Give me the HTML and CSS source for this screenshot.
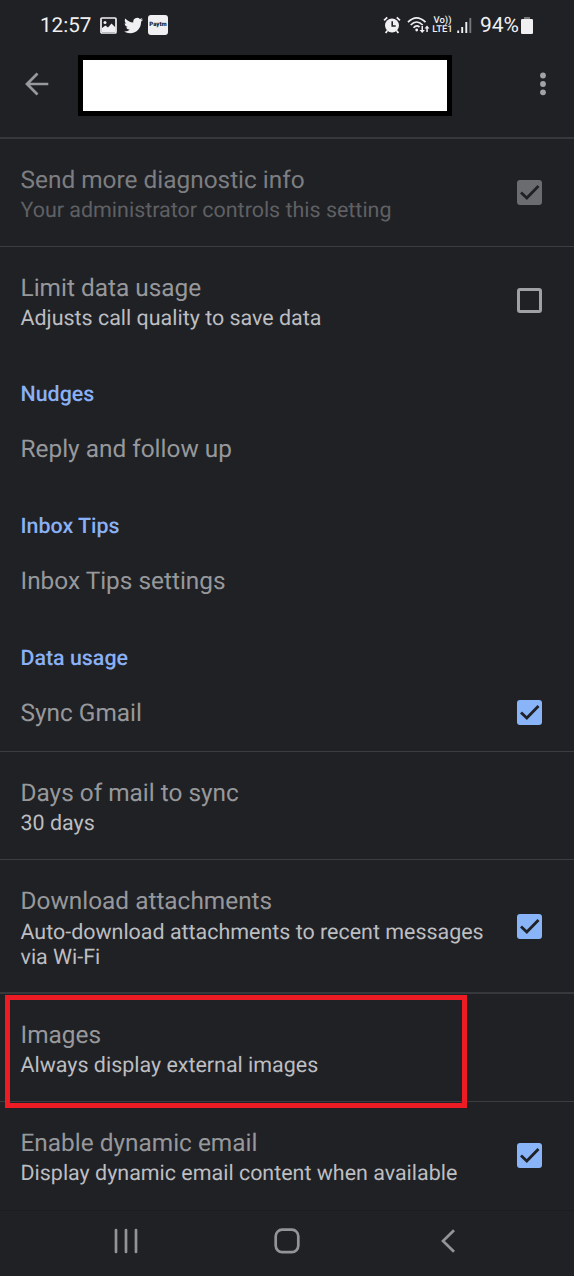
FILE: index.html
```html
<!DOCTYPE html>
<html lang="en">
<head>
  <meta charset="UTF-8" />
  <meta name="viewport" content="width=device-width, initial-scale=1.0" />
  <title>Settings</title>
  <link rel="stylesheet" href="styles.css">
</head>
<body>

<div class="screen">
  <div class="status-bar">
    <span class="time">12:57</span>
    <svg class="icon-picture" width="17" height="17" viewBox="0 0 17 17">
      <rect x="1" y="1" width="15" height="15" rx="1" fill="none" stroke="#f0f0f2" stroke-width="1.7" />
      <circle cx="5" cy="5.500" r="1.500" fill="#f0f0f2" />
      <path d="M2 11L5.500 8.500l2.500 2L11.500 6.500l4 4V15H2z" fill="#f0f0f2" />
    </svg>
    <svg class="icon-bird" width="19" height="17" viewBox="0 2 24 20">
      <path fill="#f0f0f2" d="M23.950 4.570a10 10 0 0 1-2.820.770 4.960 4.960 0 0 0 2.160-2.720c-.950.550-2 .950-3.130 1.180a4.920 4.920 0 0 0-8.380 4.480C7.690 8.090 4.070 6.130 1.640 3.160a4.820 4.820 0 0 0-.670 2.480c0 1.710.870 3.210 2.190 4.100a4.900 4.900 0 0 1-2.230-.620v.060a4.920 4.920 0 0 0 3.950 4.830 5 5 0 0 1-2.210.080 4.940 4.940 0 0 0 4.600 3.420A9.870 9.870 0 0 1 0 19.540a13.990 13.990 0 0 0 7.550 2.210c9.050 0 14-7.500 14-13.980 0-.210 0-.420-.020-.630a9.940 9.940 0 0 0 2.460-2.550z" />
    </svg>
    <span class="paytm">Paytm</span>

    <div class="status-right">
      <svg width="18" height="18" viewBox="0 0 17 17">
        <path d="M1 4.200L4 1.300M16 4.200L13 1.300M4 14l-1.500 2M13 14l1.500 2" stroke="#f0f0f2" stroke-width="1.700" fill="none" />
        <circle cx="8.500" cy="9" r="6.600" fill="#f0f0f2" />
        <path d="M8.700 5v4.500h3.300" stroke="#202125" stroke-width="1.500" fill="none" />
      </svg>
      <svg class="icon-wifi" width="23" height="18" viewBox="0 0 23 18">
        <g fill="none" stroke="#f0f0f2" stroke-width="1.700">
          <path d="M1 6.200Q9.500-2.500 18.500 6.200" />
          <path d="M3.700 9Q9.500 3 15.700 9" />
          <path d="M6.500 11.800Q9.500 8.500 12.500 11" />
        </g>
        <circle cx="9.700" cy="14" r="1.400" fill="#f0f0f2" />
        <path d="M14.500 10v4h-2l2.700 3 2.700-3h-1.900v-4zM19.300 16v-3.500h-1.800l2.500-3 2.500 3h-1.700V16z" fill="#f0f0f2" />
      </svg>
      <span class="volte"><span>Vo))</span><span>LTE1</span></span>
      <svg class="icon-signal" width="15" height="17" viewBox="0 0 15 17">
        <path d="M1.200 16v-2.500M5.200 16v-6M9.300 16V5" stroke="#f0f0f2" stroke-width="1.900" />
        <path d="M13.300 16V1" stroke="#77787b" stroke-width="1.900" />
      </svg>
      <span class="percent">94%</span>
      <svg class="icon-battery" width="12" height="17" viewBox="0 0 12 17">
        <rect x="3" y="0" width="6" height="3" fill="#77787b" />
        <rect x="0" y="2" width="12" height="15" rx="1.200" fill="#f0f0f2" />
      </svg>
    </div>
  </div>

  <div class="app-bar">
    <svg class="back" width="24" height="24" viewBox="0 0 24 24">
      <path d="M23.300 12H2.500M12.500 1.500L2 12l10.500 10.500" fill="none" stroke="#98999c" stroke-width="2.700" />
    </svg>
    <div class="account"></div>
    <svg class="more" width="6" height="24" viewBox="0 0 6 24">
      <g fill="#a2a3a6">
        <circle cx="3" cy="3.500" r="2.900" />
        <circle cx="3" cy="12" r="2.900" />
        <circle cx="3" cy="20.300" r="2.900" />
      </g>
    </svg>
  </div>

  <div class="row disabled">
    <div class="text">
      <div class="title">Send more diagnostic info</div>
      <div class="summary">Your administrator controls this setting</div>
    </div>
    <div class="checkbox checked"><svg viewBox="0 0 25 25"><path d="M4 12.500L9.800 18L21.500 6" /></svg></div>
  </div>
  <div class="row last">
    <div class="text">
      <div class="title">Limit data usage</div>
      <div class="summary">Adjusts call quality to save data</div>
    </div>
    <div class="checkbox"></div>
  </div>

  <div class="section">Nudges</div>
  <div class="row single no-line"><div class="title">Reply and follow up</div></div>

  <div class="section">Inbox Tips</div>
  <div class="row single no-line"><div class="title">Inbox Tips settings</div></div>

  <div class="section">Data usage</div>
  <div class="row single">
    <div class="title">Sync Gmail</div>
    <div class="checkbox checked"><svg viewBox="0 0 25 25"><path d="M4 12.500L9.800 18L21.500 6" /></svg></div>
  </div>
  <div class="row">
    <div class="text">
      <div class="title">Days of mail to sync</div>
      <div class="summary">30 days</div>
    </div>
  </div>
  <div class="row tall">
    <div class="text">
      <div class="title">Download attachments</div>
      <div class="summary">Auto-download attachments to recent messages<br>via Wi-Fi</div>
    </div>
    <div class="checkbox checked"><svg viewBox="0 0 25 25"><path d="M4 12.500L9.800 18L21.500 6" /></svg></div>
  </div>
  <div class="row images">
    <div class="text">
      <div class="title">Images</div>
      <div class="summary">Always display external images</div>
    </div>
    <div class="highlight"></div>
  </div>
  <div class="row no-line">
    <div class="text">
      <div class="title">Enable dynamic email</div>
      <div class="summary">Display dynamic email content when available</div>
    </div>
    <div class="checkbox checked"><svg viewBox="0 0 25 25"><path d="M4 12.500L9.800 18L21.500 6" /></svg></div>
  </div>

  <div class="nav-bar">
    <svg width="26" height="26" viewBox="-1 0 26 26">
      <path d="M2 2v22M12 2v22M22 2v22" stroke="#939497" stroke-width="2.700" stroke-linecap="round" />
    </svg>
    <svg width="26" height="26" viewBox="0 0 26 26">
      <rect x="1.700" y="1.700" width="22.600" height="22.400" rx="6.500" fill="none" stroke="#939497" stroke-width="2.700" />
    </svg>
    <svg width="26" height="26" viewBox="-5 0 26 26">
      <path d="M14 2.200L3 13l11 10.800" fill="none" stroke="#939497" stroke-width="2.700" />
    </svg>
  </div>
</div>

</body>
</html>
```

FILE: styles.css
```css
/* General Styling */
body {
  font-family: Roboto, sans-serif;
  background-color: #ffffff;
  margin: 0;
  text-rendering: geometricPrecision;
}

.screen {
  width: 574px;
  height: 1276px;
  background-color: #202125;
  overflow: hidden;
}

svg {
  display: block;
  flex: none;
}

/* Status bar */
.status-bar {
  display: flex;
  align-items: center;
  height: 50px;
  padding: 0 41px 0 40px;
  box-sizing: border-box;
  color: #f0f0f2;
  font-size: 21px;
}

.time {
  width: 60px;
  padding-top: 1px;
  font-size: 20.6px;
}

.icon-bird {
  margin-left: 7px;
}

.paytm {
  width: 20px;
  height: 20px;
  margin-left: 5px;
  border-radius: 3px;
  background-color: #f0f0f2;
  color: #202125;
  font-size: 6px;
  font-weight: 900;
  line-height: 19px;
  text-align: center;
}

.status-right {
  display: flex;
  align-items: center;
  margin-left: auto;
}

.icon-wifi {
  margin-left: 6px;
}

.volte {
  display: flex;
  flex-direction: column;
  align-items: center;
  width: 21px;
  margin-left: 2px;
  font-size: 9.5px;
  font-weight: 500;
  line-height: 9px;
}

.icon-signal {
  margin-left: 4px;
}

.percent {
  width: 39px;
  margin-left: 8px;
  padding-top: 1px;
}

.icon-battery {
  margin-left: 2px;
}

/* App bar */
.app-bar {
  display: flex;
  align-items: center;
  height: 89px;
  padding: 7px 28px 26px 25px;
  box-sizing: border-box;
  border-bottom: 2px solid #37383c;
}

.account {
  flex: none;
  width: 364px;
  height: 51px;
  margin: 2px 0 0 29px;
  border: 5px solid #000000;
  background-color: #ffffff;
}

.more {
  margin-left: auto;
}

/* Settings rows */
.row {
  display: flex;
  align-items: center;
  justify-content: space-between;
  position: relative;
  height: 108px;
  padding: 0 32px 0 20.5px;
  box-sizing: border-box;
  border-bottom: 1px solid #3c3d40;
}

.row.no-line {
  border-bottom-color: transparent;
}

.row.last {
  height: 109px;
  border-bottom: 2px solid transparent;
}

.row.single {
  height: 76px;
}

.row.tall {
  height: 134px;
  border-bottom-width: 2px;
  border-bottom-color: #37383c;
}

.text {
  padding-top: 2px;
}

.tall .text {
  padding-top: 4px;
}

.title {
  color: #97989b;
  font-size: 24.4px;
  line-height: 29px;
  white-space: nowrap;
}

.single .title {
  margin-bottom: 2px;
}

.summary {
  margin-top: 4px;
  color: #bdbec1;
  font-size: 21.45px;
  line-height: 25px;
  white-space: nowrap;
}

.tall .summary {
  margin-top: 5px;
}

.disabled .title {
  color: #7d7e81;
}

.disabled .summary {
  color: #5f6063;
}

.section {
  height: 56px;
  padding: 26px 20.5px 0;
  box-sizing: border-box;
  color: #8ab0f5;
  font-size: 21.4px;
  font-weight: 500;
  line-height: 25px;
}

/* Checkboxes */
.checkbox {
  flex: none;
  width: 25px;
  height: 25px;
  box-sizing: border-box;
  border: 3px solid #a0a1a4;
  border-radius: 3px;
}

.checkbox.checked {
  border: none;
  background-color: #8ab4f8;
}

.disabled .checkbox {
  background-color: #6b6c70;
}

.single .checkbox {
  margin-bottom: 2px;
}

.checkbox path {
  fill: none;
  stroke: #202125;
  stroke-width: 2.8;
}

/* Red frame round the Images setting */
.highlight {
  position: absolute;
  left: 5px;
  top: 1px;
  z-index: 1;
  width: 452px;
  height: 103px;
  border: 5px solid #ed1c24;
}

/* Navigation bar */
.nav-bar {
  display: flex;
  align-items: center;
  justify-content: space-between;
  height: 65px;
  padding: 0 113px 4px 113px;
  box-sizing: border-box;
  border-top: 1px solid #1b1c1f;
}
```
